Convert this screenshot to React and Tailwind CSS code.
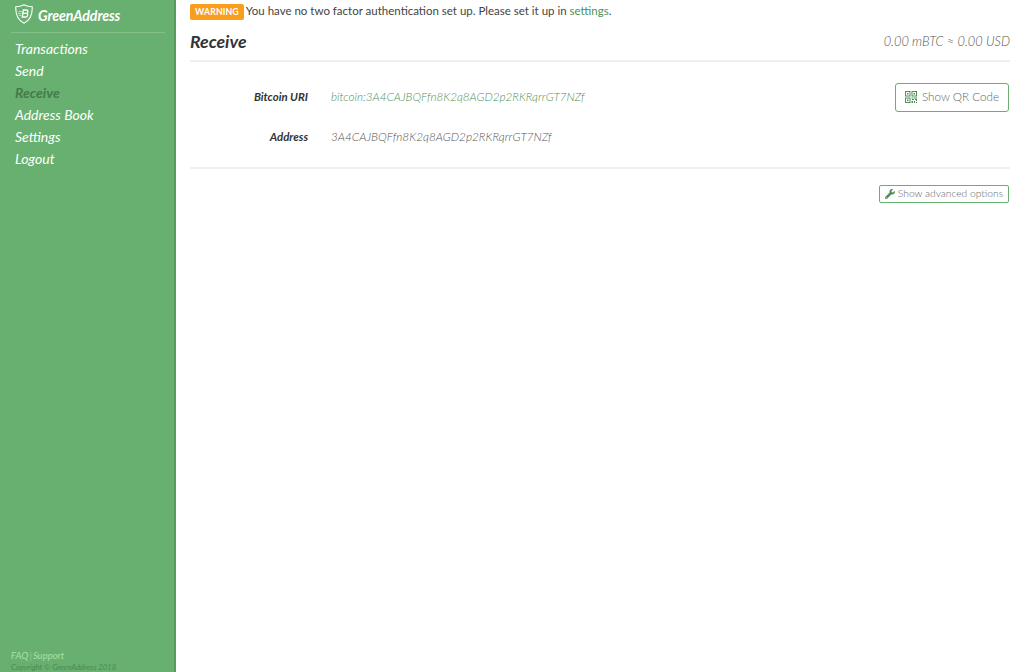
import { FaWrench } from "react-icons/fa";

const navItems = [
  { label: "Transactions" },
  { label: "Send" },
  { label: "Receive", active: true },
  { label: "Address Book" },
  { label: "Settings" },
  { label: "Logout" },
];

function ShieldLogo() {
  return (
    <svg viewBox="0 0 18 20" className="w-[18px] h-[20px]" fill="none" stroke="white">
      <path d="M9 0.8 C6.5 2.2 4 2.8 0.8 2.8 C0.5 9 1.2 15.5 9 19.2 C16.8 15.5 17.5 9 17.2 2.8 C14 2.8 11.5 2.2 9 0.8 Z" strokeWidth="1.1" />
      <path d="M8.4 6 H11.6 C13.4 6 13.2 9 11.4 9.3 C13.4 9.6 13 13 10.8 13 H7.2 Z M8.2 9.4 H11" strokeWidth="1.4" />
      <path d="M3.4 7.5 H7 M3 9.5 H6.4 M3.8 11.5 H6" strokeWidth="0.6" />
    </svg>
  );
}

function QrIcon() {
  return (
    <svg viewBox="0 0 12 12" className="w-[12px] h-[12px]" fill="#4f8f56">
      <path d="M0 0h5.5v5.5H0z M1 1v3.5h3.5V1z M2 2h1.5v1.5H2z" fillRule="evenodd" />
      <path d="M6.5 0h5.5v5.5H6.5z M7.5 1v3.5H11V1z M8.5 2H10v1.5H8.5z" fillRule="evenodd" />
      <path d="M0 6.5h5.5V12H0z M1 7.5V11h3.5V7.5z M2 8.5h1.5V10H2z" fillRule="evenodd" />
      <path d="M6.5 6.5h2v1h-2z M9 6.5h3v1H9z M7 8h2v1H7z M10 8h2v2h-1V9h-1z M6.5 10h1.5v2H6.5z M9 10h1v2H9z M11 11h1v1h-1z" />
    </svg>
  );
}

export default function App() {
  return (
    <div className="flex h-[672px] overflow-hidden bg-white font-['Lato','Open_Sans',sans-serif] text-[#333]">
      <aside className="w-[176px] shrink-0 flex flex-col bg-[#68b06f] border-r-2 border-[#5a9a61] overflow-hidden">
        <div className="ml-[11px] mr-[9px] mt-[4px] h-[29px] flex items-start gap-[5px] pl-[4px] border-b border-[#85c08b]">
          <ShieldLogo />
          <span className="text-white font-bold italic text-[14.2px] leading-[23px] tracking-[-0.1px]">GreenAddress</span>
        </div>
        <nav className="mt-[5px] pl-[15px] flex flex-col">
          {navItems.map((item) => (
            <a
              key={item.label}
              className={`h-[22px] leading-[22px] text-[14px] italic ${
                item.active ? "text-[#447a4b] font-bold" : "text-white"
              }`}
            >
              {item.label}
            </a>
          ))}
        </nav>
        <div className="mt-auto pl-[11px] italic">
          <div className="flex gap-[1px] text-[9.5px] leading-[13px] text-[#a8e0a9]">
            <span>FAQ</span>
            <span className="text-[#8fcb94]">|</span>
            <span>Support</span>
          </div>
          <div className="text-[7.7px] leading-[10px] text-[#4a8a52]">Copyright © GreenAddress 2018</div>
        </div>
      </aside>

      <main className="w-[834px] pl-[14px] flex flex-col">
        <div className="flex items-center h-[16px] mt-[4px] gap-[2px]">
          <span className="bg-[#f99d1c] text-white font-bold text-[8.8px] leading-[16px] rounded-[2px] px-[5px] tracking-[0.1px]">WARNING</span>
          <span className="text-[11.5px] leading-[14px] pb-[2px] text-[#444]">
            You have no two factor authentication set up. Please set it up in <a className="text-[#4f8f56]">settings</a>.
          </span>
        </div>

        <div className="flex items-center justify-between h-[42px] pt-[4px] border-b-2 border-[#eeeeee]">
          <h1 className="text-[17.7px] font-bold italic text-[#333]">Receive</h1>
          <span className="text-[12.8px] font-light italic text-[#555]">0.00 mBTC ≈ 0.00 USD</span>
        </div>

        <div className="border-b-2 border-[#f0f0f0] h-[107px] pt-[20px]">
          <div className="flex items-center h-[30px]">
            <span className="w-[118px] text-right text-[11.4px] font-bold italic text-[#333]">Bitcoin URI</span>
            <a className="ml-[23px] text-[11.7px] font-light italic text-[#4f8f56]">bitcoin:3A4CAJBQFfn8K2q8AGD2p2RKRqrrGT7NZf</a>
            <button className="ml-auto mr-px w-[114px] h-[29px] flex items-center justify-center gap-[5px] rounded-[3px] border border-[#68b06f] text-[11.7px] font-light text-[#666]">
              <QrIcon />
              Show QR Code
            </button>
          </div>
          <div className="flex items-center h-[30px] mt-[10px]">
            <span className="w-[118px] text-right text-[11.4px] font-bold italic text-[#333]">Address</span>
            <span className="ml-[23px] text-[11.8px] font-light italic text-[#555]">3A4CAJBQFfn8K2q8AGD2p2RKRqrrGT7NZf</span>
          </div>
        </div>

        <div className="flex justify-end mt-[16px] pr-px">
          <button className="w-[130px] h-[18px] flex items-center justify-center gap-[3px] rounded-[2px] border border-[#68b06f] text-[10.3px] font-light text-[#666]">
            <FaWrench className="text-[10px] text-[#4f8f56]" />
            Show advanced options
          </button>
        </div>
      </main>
    </div>
  );
}
